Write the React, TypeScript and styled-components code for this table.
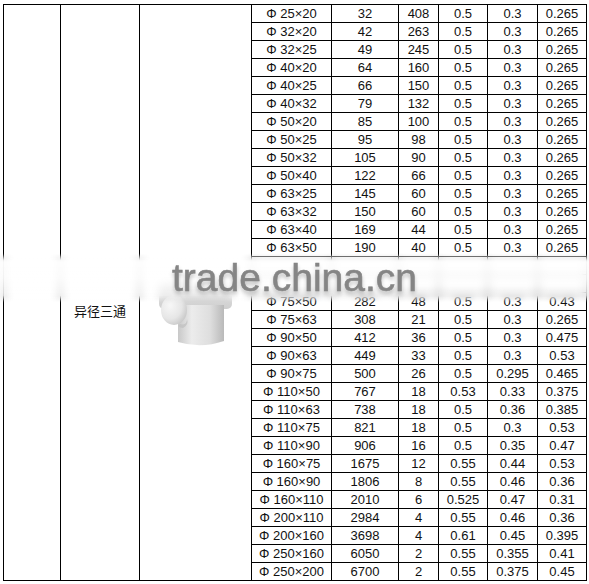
import React from 'react'
import styled, { createGlobalStyle } from 'styled-components'

const GlobalStyle = createGlobalStyle`
  html, body {
    margin: 0;
    padding: 0;
    background: #fff;
  }
  body {
    font-family: 'Liberation Sans', Arial, sans-serif;
  }
`

type Row = [string, string, string, string, string, string]

// rows 14 and 15 sit under the watermark band and show nothing
const blank: Row = ['', '', '', '', '', '']

const rows: Row[] = [
  ['Φ 25×20', '32', '408', '0.5', '0.3', '0.265'],
  ['Φ 32×20', '42', '263', '0.5', '0.3', '0.265'],
  ['Φ 32×25', '49', '245', '0.5', '0.3', '0.265'],
  ['Φ 40×20', '64', '160', '0.5', '0.3', '0.265'],
  ['Φ 40×25', '66', '150', '0.5', '0.3', '0.265'],
  ['Φ 40×32', '79', '132', '0.5', '0.3', '0.265'],
  ['Φ 50×20', '85', '100', '0.5', '0.3', '0.265'],
  ['Φ 50×25', '95', '98', '0.5', '0.3', '0.265'],
  ['Φ 50×32', '105', '90', '0.5', '0.3', '0.265'],
  ['Φ 50×40', '122', '66', '0.5', '0.3', '0.265'],
  ['Φ 63×25', '145', '60', '0.5', '0.3', '0.265'],
  ['Φ 63×32', '150', '60', '0.5', '0.3', '0.265'],
  ['Φ 63×40', '169', '44', '0.5', '0.3', '0.265'],
  ['Φ 63×50', '190', '40', '0.5', '0.3', '0.265'],
  blank,
  blank,
  ['Φ 75×50', '282', '48', '0.5', '0.3', '0.43'],
  ['Φ 75×63', '308', '21', '0.5', '0.3', '0.265'],
  ['Φ 90×50', '412', '36', '0.5', '0.3', '0.475'],
  ['Φ 90×63', '449', '33', '0.5', '0.3', '0.53'],
  ['Φ 90×75', '500', '26', '0.5', '0.295', '0.465'],
  ['Φ 110×50', '767', '18', '0.53', '0.33', '0.375'],
  ['Φ 110×63', '738', '18', '0.5', '0.36', '0.385'],
  ['Φ 110×75', '821', '18', '0.5', '0.3', '0.53'],
  ['Φ 110×90', '906', '16', '0.5', '0.35', '0.47'],
  ['Φ 160×75', '1675', '12', '0.55', '0.44', '0.53'],
  ['Φ 160×90', '1806', '8', '0.55', '0.46', '0.36'],
  ['Φ 160×110', '2010', '6', '0.525', '0.47', '0.31'],
  ['Φ 200×110', '2984', '4', '0.55', '0.46', '0.36'],
  ['Φ 200×160', '3698', '4', '0.61', '0.45', '0.395'],
  ['Φ 250×160', '6050', '2', '0.55', '0.355', '0.41'],
  ['Φ 250×200', '6700', '2', '0.55', '0.375', '0.45'],
]

function TeeFitting() {
  return (
    <svg width="80" height="72" viewBox="0 0 80 72">
      <defs>
        <linearGradient id="run" x1="0" y1="0" x2="0" y2="1">
          <stop offset="0" stopColor="#e6e6e6" />
          <stop offset="1" stopColor="#cfcfcf" />
        </linearGradient>
        <linearGradient id="leg" x1="0" y1="0" x2="1" y2="0">
          <stop offset="0" stopColor="#c8c8c8" />
          <stop offset="0.3" stopColor="#ececec" />
          <stop offset="0.7" stopColor="#dedede" />
          <stop offset="1" stopColor="#b9b9b9" />
        </linearGradient>
        <radialGradient id="face" cx="0.35" cy="0.35" r="0.75">
          <stop offset="0" stopColor="#f7f7f7" />
          <stop offset="0.6" stopColor="#e6e6e6" />
          <stop offset="1" stopColor="#c4c4c4" />
        </radialGradient>
      </defs>
      <rect x="3" y="2" width="73" height="28" rx="5" fill="url(#run)" />
      <path d="M22 26 L68 26 L68 62 Q45 70 22 63 Z" fill="url(#leg)" />
      <ellipse cx="18" cy="31" rx="13" ry="15" fill="url(#face)" />
      <path d="M24 45 Q31 47 31 40 Q33 46 27 49 Q24 49 22 47 Z" fill="#c2c2c2" opacity="0.8" />
    </svg>
  )
}

export default function App() {
  return (
    <>
      <GlobalStyle />
      <Page>
        <Sheet>
          <SpanCell $col={1} />
          <LabelCell $col={2}>异径三通</LabelCell>
          <PictureCell $col={3}>
            <TeeFitting />
          </PictureCell>
          {rows.map((row, r) => row.map((value, i) => <Cell key={`${r}-${i}`}>{value}</Cell>))}
        </Sheet>
        <Watermark>
          <Band />
          <Mark>trade.china.cn</Mark>
        </Watermark>
      </Page>
    </>
  )
}

const Page = styled.div`
  position: relative;
  width: 589px;
  height: 584px;
  overflow: hidden;
`

const Sheet = styled.div`
  display: grid;
  grid-template-columns: 56px 78px 111px 79px 66px 39px 48px 49px 48px;
  grid-auto-rows: 17px;
  gap: 1px;
  padding: 1px;
  width: fit-content;
  margin: 4px 0 0 3px;
  background: #000;
`

const Cell = styled.div`
  display: flex;
  align-items: center;
  justify-content: center;
  background: #fff;
  color: #111;
  font-family: 'Liberation Sans', Arial, sans-serif;
  font-size: 13px;
  line-height: 17px;
  white-space: nowrap;
`

const SpanCell = styled.div<{ $col: number }>`
  grid-column: ${(p) => p.$col};
  grid-row: 1 / span 32;
  background: #fff;
`

const LabelCell = styled(SpanCell)`
  display: flex;
  align-items: center;
  justify-content: center;
  padding-top: 36px;
  box-sizing: border-box;
  color: #111;
  font-family: 'Noto Sans CJK SC', 'Liberation Sans', sans-serif;
  font-size: 13px;
`

const PictureCell = styled(SpanCell)`
  display: flex;
  align-items: flex-start;
  justify-content: center;
  padding-top: 274px;
  box-sizing: border-box;
`

const Watermark = styled.div`
  position: absolute;
  left: 0;
  top: 253px;
  width: 589px;
  height: 50px;
  pointer-events: none;
`

const Band = styled.div`
  position: absolute;
  inset: 0;
  backdrop-filter: blur(4px);
  background: linear-gradient(
    to bottom,
    rgba(255, 255, 255, 0) 0%,
    rgba(255, 255, 255, 0.9) 18%,
    rgba(255, 255, 255, 0.82) 50%,
    rgba(255, 255, 255, 0.5) 80%,
    rgba(255, 255, 255, 0) 100%
  );
  mask-image: linear-gradient(to bottom, transparent 0%, #000 15%, #000 85%, transparent 100%);
`

const Mark = styled.div`
  position: absolute;
  left: 172px;
  top: 11px;
  font-family: 'Liberation Sans', Arial, sans-serif;
  font-size: 39px;
  line-height: 28px;
  color: #858585;
  -webkit-text-stroke: 0.6px #858585;
  text-shadow: 0 3px 4px rgba(0, 0, 0, 0.28);
  filter: blur(0.5px);
`
